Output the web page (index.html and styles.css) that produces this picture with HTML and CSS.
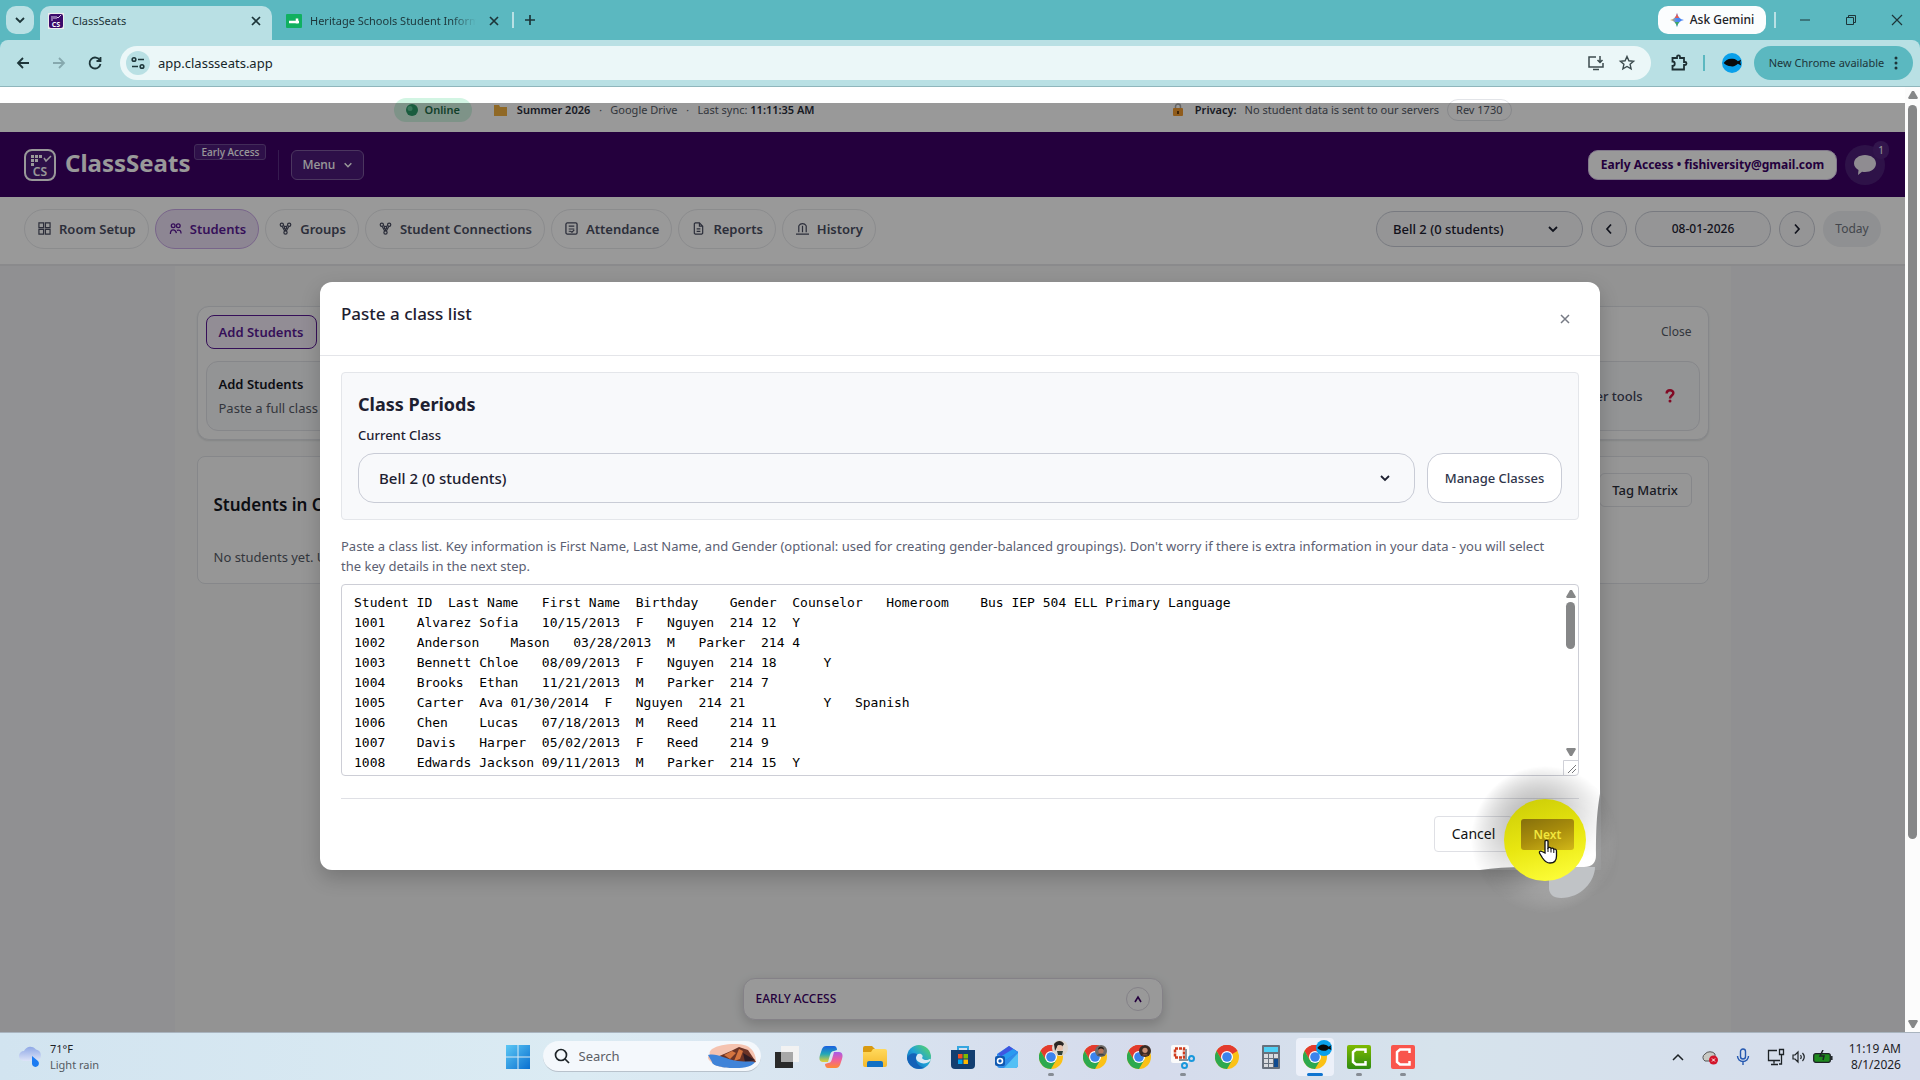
FILE: index.html
```html
<!DOCTYPE html>
<html lang="en">
<head>
<meta charset="utf-8">
<title>ClassSeats</title>
<link rel="stylesheet" href="styles.css">
</head>
<body>
<svg class="defs" aria-hidden="true">
  <defs>
    <linearGradient id="g-win" x1="0" y1="0" x2="1" y2="1"><stop offset="0" stop-color="#5cc8f5"/><stop offset="1" stop-color="#0a6fd0"/></linearGradient>
    <linearGradient id="g-cloud" x1="0" y1="0" x2="0" y2="1"><stop offset="0" stop-color="#8fa8e6"/><stop offset="1" stop-color="#dde4f8"/></linearGradient>
    <linearGradient id="g-folder" x1="0" y1="0" x2="0" y2="1"><stop offset="0" stop-color="#ffd95c"/><stop offset="1" stop-color="#f5b92c"/></linearGradient>
    <linearGradient id="g-edge" x1="0" y1="1" x2="1" y2="0"><stop offset="0" stop-color="#0b56a8"/><stop offset=".5" stop-color="#1fa0d8"/><stop offset="1" stop-color="#5fdc5a"/></linearGradient>
    <linearGradient id="g-cop1" x1="0" y1="0" x2="0" y2="1"><stop offset="0" stop-color="#1a5fe0"/><stop offset=".5" stop-color="#22a8b8"/><stop offset="1" stop-color="#e8d030"/></linearGradient>
    <linearGradient id="g-cop2" x1="0" y1="0" x2="0" y2="1"><stop offset="0" stop-color="#a75be8"/><stop offset=".5" stop-color="#f0609a"/><stop offset="1" stop-color="#ff8a30"/></linearGradient>
    <linearGradient id="g-gem" x1="0" y1="0" x2="1" y2="0"><stop offset="0" stop-color="#f2b32a"/><stop offset=".45" stop-color="#4f8df5"/><stop offset="1" stop-color="#3a78f0"/></linearGradient>
    <linearGradient id="g-green" x1="0" y1="0" x2="0" y2="1"><stop offset="0" stop-color="#7fba00"/><stop offset="1" stop-color="#2e8b10"/></linearGradient>
    <symbol id="chrome" viewBox="0 0 24 24">
      <circle cx="12" cy="12" r="12" fill="#fbc116"/>
      <path d="M12 12 1.600 6A12 12 0 0 1 22.400 6z" fill="#e33b2e"/>
      <path d="M12 6h10.400A12 12 0 0 0 1.600 6l5.200 9z" fill="#e33b2e"/>
      <path d="M1.600 6A12 12 0 0 0 12 24l5.200-9L12 12 6.800 15z" fill="#2da94f"/>
      <circle cx="12" cy="12" r="6" fill="#fff"/><circle cx="12" cy="12" r="4.800" fill="#3c83ec"/>
    </symbol>
    <symbol id="chev" viewBox="0 0 12 12"><path d="M2 4l4 4 4-4" fill="none" stroke="currentColor" stroke-width="1.800"/></symbol>
    <symbol id="cross" viewBox="0 0 12 12"><path d="M2 2l8 8M10 2l-8 8" fill="none" stroke="currentColor" stroke-width="1.700"/></symbol>
    <symbol id="bird" viewBox="0 0 24 24"><circle cx="12" cy="12" r="12" fill="#0aa0ea"/><path d="M2 12c2-3 6-6 11-5 3 0 5 2 6 3l4-2-1 3 1 4-4-2c-2 2-5 4-8 3-4 0-7-2-9-4z" fill="#0a0a0a"/></symbol>
    <symbol id="up" viewBox="0 0 12 12"><path d="M5 2h2l4 7-1 1H2L1 9z" fill="#868788"/></symbol>
    <symbol id="nodes" viewBox="0 0 16 16"><g fill="none" stroke="currentColor" stroke-width="1.500"><circle cx="3.500" cy="3.500" r="2"/><circle cx="12.500" cy="3.500" r="2"/><circle cx="8" cy="13" r="2"/><circle cx="8" cy="7" r="1.500"/><path d="M5.500 4l1.500 2M10.500 4L9 6M8 8.500V11M4 5.500l3 5.500M12 5.500L9 11"/></g></symbol>
  </defs>
</svg>

<header class="tabs">
  <button class="tab-search" aria-label="Search tabs"><svg width="12" height="12"><use href="#chev"/></svg></button>
  <div class="tab tab-active">
    <svg width="16" height="16" viewBox="0 0 16 16"><rect width="16" height="16" fill="#eee"/><rect x="1" y="1" width="14" height="14" rx="2" fill="#3b0b6b"/><path d="M4 3v5M6 3v3M8 3v3" stroke="#d8cbe8"/><path d="M9 4l1 1 3-3" stroke="#d8cbe8" fill="none"/><text x="8" y="14" font-size="7" text-anchor="middle" fill="#fff" font-weight="700">CS</text></svg>
    <span class="tab-title">ClassSeats</span>
    <button class="tab-x" aria-label="Close tab"><svg width="12" height="12"><use href="#cross"/></svg></button>
  </div>
  <div class="tab tab-other">
    <svg width="16" height="16" viewBox="0 0 16 16"><rect y="1" width="16" height="14" rx="1" fill="#10b060"/><path d="M3 9h10M11 5.500v5" stroke="#fff" stroke-width="2.500"/></svg>
    <span class="tab-title fade">Heritage Schools Student Information</span>
    <button class="tab-x" aria-label="Close tab"><svg width="12" height="12"><use href="#cross"/></svg></button>
  </div>
  <span class="tab-rule"></span>
  <button class="icon-btn" aria-label="New tab"><svg width="12" height="12" viewBox="0 0 12 12"><path d="M6 1v10M1 6h10" stroke="#1d3539" stroke-width="1.700"/></svg></button>
  <span class="grow"></span>
  <button class="gemini"><svg width="14" height="14" viewBox="0 0 14 14"><path d="M7 0c.8 4 3 6.200 7 7-4 .8-6.200 3-7 7-.8-4-3-6.200-7-7 4-.8 6.200-3 7-7z" fill="url(#g-gem)"/><path d="M7 0c.5 2.500 1.300 4 2.500 5l-5 0C5.700 4 6.500 2.500 7 0z" fill="#ea5a4f"/><path d="M7 14c-.5-2.500-1.300-4-2.500-5h5C8.300 10 7.500 11.500 7 14z" fill="#3fa860"/></svg>Ask Gemini</button>
  <span class="tab-rule"></span>
  <div class="win-btns">
    <button aria-label="Minimize"><svg width="12" height="12" viewBox="0 0 12 12"><path d="M1 6h10" stroke="#1d3539"/></svg></button>
    <button aria-label="Restore"><svg width="12" height="12" viewBox="0 0 12 12"><path d="M1.500 3.500h7v7h-7zM3.500 3.500v-2h7v7h-2" fill="none" stroke="#1d3539"/></svg></button>
    <button aria-label="Close"><svg width="12" height="12" viewBox="0 0 12 12"><path d="M1 1l10 10M11 1L1 11" stroke="#1d3539" stroke-width="1.200"/></svg></button>
  </div>
</header>

<div class="toolbar">
  <div class="nav-btns">
    <button aria-label="Back"><svg width="16" height="16" viewBox="0 0 16 16"><path d="M14 8H3M8 3L3 8l5 5" fill="none" stroke="#1d3539" stroke-width="1.800"/></svg></button>
    <button aria-label="Forward"><svg width="16" height="16" viewBox="0 0 16 16"><path d="M2 8h11M8 3l5 5-5 5" fill="none" stroke="#86a9ae" stroke-width="1.800"/></svg></button>
    <button aria-label="Reload"><svg width="16" height="16" viewBox="0 0 16 16"><path d="M13 5.500A5.500 5.500 0 1 0 13.500 9M13.500 2v4h-4" fill="none" stroke="#1d3539" stroke-width="1.800"/></svg></button>
  </div>
  <div class="omni">
    <span class="site"><svg width="16" height="16" viewBox="0 0 16 16"><g fill="none" stroke="#1d3539" stroke-width="1.600"><circle cx="4" cy="4.500" r="1.800"/><path d="M8 4.500h6M2 11.500h6"/><circle cx="12" cy="11.500" r="1.800"/></g></svg></span>
    <input class="url" type="text" aria-label="Address" value="app.classseats.app">
    <svg width="18" height="18" viewBox="0 0 18 18"><path d="M9 3H2v10h14V9M6 15.500h6M13 2v6M10.500 6L13 8.500 15.500 6" fill="none" stroke="#3c4b4e" stroke-width="1.500"/></svg>
    <svg width="18" height="18" viewBox="0 0 18 18"><path d="M9 2.500l1.900 4.300 4.700.4-3.500 3.100 1 4.600L9 12.500l-4.100 2.400 1-4.600L2.400 7.200l4.700-.4z" fill="none" stroke="#3c4b4e" stroke-width="1.400"/></svg>
  </div>
  <svg class="puzzle" width="18" height="18" viewBox="0 0 18 18"><path d="M2.500 4h4.500V2.800a1.500 1.500 0 0 1 3 0V4h4v4h1a1.500 1.500 0 0 1 0 3h-1v4.500H2.500V12a2 2 0 0 0 0-4.500z" fill="none" stroke="#1d2f33" stroke-width="1.800"/></svg>
  <span class="tool-rule"></span>
  <svg width="20" height="20"><use href="#bird"/></svg>
  <button class="update">New Chrome available<svg width="4" height="14" viewBox="0 0 4 14"><g fill="#1d3539"><circle cx="2" cy="2" r="1.500"/><circle cx="2" cy="7" r="1.500"/><circle cx="2" cy="12" r="1.500"/></g></svg></button>
</div>

<div class="view">
  <div class="page">
    <div class="status"><div class="status-in">
      <span class="online"><svg width="12" height="12" viewBox="0 0 12 12"><circle cx="6" cy="6" r="6" fill="#2a9a68"/><circle cx="4" cy="4.500" r="2.500" fill="#5fc796"/></svg>Online</span>
      <svg class="folder" width="13" height="12" viewBox="0 0 13 12"><path d="M0 1h5l1 2h7v9H0z" fill="#f0b040"/></svg>
      <b>Summer 2026</b><i>·</i><span>Google Drive</span><i>·</i><span>Last sync: <b>11:11:35 AM</b></span>
      <span class="grow"></span>
      <svg width="10" height="13" viewBox="0 0 10 13"><path d="M2.500 6V3.500a2.500 2.500 0 0 1 5 0V6" fill="none" stroke="#a8a8a8" stroke-width="1.500"/><rect y="5" width="10" height="8" rx="1" fill="#f09a30"/><path d="M5 8v3" stroke="#402000" stroke-width="1.500"/></svg>
      <b class="priv">Privacy:</b><span class="nodata">No student data is sent to our servers</span>
      <span class="rev">Rev 1730</span>
    </div></div>

    <div class="brand">
      <svg width="32" height="32" viewBox="0 0 32 32"><rect x="1" y="1" width="30" height="30" rx="7" fill="#4b1c78" stroke="#fff" stroke-width="2"/><g fill="#fff"><path d="M7 6h3v3H7zM11 6h3v3h-3zM15 6h3v3h-3zM7 10h3v3H7zM11 10h3v3h-3zM7 14h3v3H7z"/></g><path d="M20 9l2 3 5-5" fill="none" stroke="#fff" stroke-width="1.500"/><text x="16" y="27" font-size="12" font-weight="600" text-anchor="middle" fill="#fff">CS</text></svg>
      <span class="logo">ClassSeats</span>
      <span class="early">Early Access</span>
      <span class="brand-rule"></span>
      <button class="menu">Menu<svg width="10" height="10"><use href="#chev"/></svg></button>
      <span class="grow"></span>
      <button class="account">Early Access • fishiversity@gmail.com</button>
      <button class="chat" aria-label="Messages"><svg width="24" height="22" viewBox="0 0 24 22"><path d="M12 1c6 0 11 3.500 11 8.500S18 18 12 18c-1 0-2 0-3-.3L5 21l.5-5C3 14.500 1 12.500 1 9.500 1 4.500 6 1 12 1z" fill="#eee9f2"/></svg><span class="chat-n">1</span></button>
    </div>

    <nav class="nav">
      <button class="pill"><svg width="13" height="13" viewBox="0 0 14 14"><path d="M1 1h5v5H1zM8 1h5v5H8zM1 8h5v5H1zM8 8h5v5H8z" fill="none" stroke="currentColor" stroke-width="1.300"/></svg>Room Setup</button>
      <button class="pill on"><svg width="13" height="13" viewBox="0 0 14 14"><g fill="none" stroke="currentColor" stroke-width="1.400"><circle cx="4.500" cy="4" r="2"/><circle cx="10" cy="4" r="2"/><path d="M1.500 13c0-3 1-4.500 3-4.500S7.500 10 8 12M8.500 9c3-1 4.500.5 4.500 3.500"/></g></svg>Students</button>
      <button class="pill"><svg width="13" height="13"><use href="#nodes"/></svg>Groups</button>
      <button class="pill"><svg width="13" height="13"><use href="#nodes"/></svg>Student Connections</button>
      <button class="pill"><svg width="13" height="13" viewBox="0 0 14 14"><rect x="1" y="1" width="12" height="12" rx="1.500" fill="none" stroke="currentColor" stroke-width="1.400"/><path d="M4 4.500h6M4 7.500h6M4 10h2l1.500 1L10 8.500" fill="none" stroke="currentColor" stroke-width="1.200"/></svg>Attendance</button>
      <button class="pill"><svg width="13" height="13" viewBox="0 0 14 14"><path d="M3.500 1H8l3.500 3.500V12l-1 1h-7l-1-1V2zM8 1v3.500h3M5 7.500h4M5 10h4" fill="none" stroke="currentColor" stroke-width="1.300"/></svg>Reports</button>
      <button class="pill"><svg width="13" height="13" viewBox="0 0 14 14"><path d="M3 11V4M7 11V4M11 11V4M3 4c2-3 6-3 8 0M0 13h14" fill="none" stroke="currentColor" stroke-width="1.300"/></svg>History</button>
      <span class="grow"></span>
      <div class="pick">
        <span class="sel sel-nav"><select aria-label="Class"><option>Bell 2 (0 students)</option></select><svg width="12" height="12"><use href="#chev"/></svg></span>
        <button class="step" aria-label="Previous day"><svg width="12" height="12" viewBox="0 0 12 12"><path d="M8 1.500L4 6l4 4.500" fill="none" stroke="currentColor" stroke-width="1.700"/></svg></button>
        <input class="date" type="text" aria-label="Date" value="08-01-2026">
        <button class="step" aria-label="Next day"><svg width="12" height="12" viewBox="0 0 12 12"><path d="M4 1.500L8 6l-4 4.500" fill="none" stroke="currentColor" stroke-width="1.700"/></svg></button>
        <button class="today">Today</button>
      </div>
    </nav>

    <main class="main">
      <section class="card">
        <div class="card-top"><button class="add">Add Students</button><button class="close">Close</button></div>
        <div class="panel">
          <div><h3>Add Students</h3><p>Paste a full class list</p></div>
          <div class="tools">Other tools<svg width="10" height="14" viewBox="0 0 12 16"><path d="M2 5c0-5 8-5 8-.5 0 3-4 3-4 6.500" fill="none" stroke="#d8103c" stroke-width="3"/><circle cx="6" cy="14" r="1.800" fill="#d8103c"/></svg></div>
        </div>
      </section>
      <section class="card list">
        <div class="list-top"><h2>Students in Class</h2><button class="tag">Tag Matrix</button></div>
        <p>No students yet. Use Add Students.</p>
      </section>
    </main>

    <button class="dock">EARLY ACCESS<span class="dock-up"><svg width="8" height="8" viewBox="0 0 8 8"><path d="M1 7l3-5 3 5" fill="none" stroke="currentColor" stroke-width="1.600"/></svg></span></button>
    <div class="shade"></div>
  </div>
  <div class="scroll"><svg width="12" height="12"><use href="#up"/></svg><span class="thumb"></span><span class="grow"></span><svg class="flip" width="12" height="12"><use href="#up"/></svg></div>

  <div class="layer">
    <div class="modal" role="dialog" aria-labelledby="mt">
      <div class="m-head"><h1 id="mt">Paste a class list</h1><button aria-label="Close"><svg width="12" height="12" viewBox="0 0 12 12"><path d="M2 2l8 8M10 2l-8 8" stroke="#777b85" stroke-width="1.500"/></svg></button></div>
      <div class="m-body">
        <section class="periods">
          <h2>Class Periods</h2>
          <label for="cls">Current Class</label>
          <div class="p-row">
            <span class="sel sel-big"><select id="cls"><option>Bell 2 (0 students)</option></select><svg width="12" height="12"><use href="#chev"/></svg></span>
            <button class="manage">Manage Classes</button>
          </div>
        </section>
        <p class="help" id="help">Paste a class list. Key information is First Name, Last Name, and Gender (optional: used for creating gender-balanced groupings). Don't worry if there is extra information in your data - you will select the key details in the next step.</p>
        <div class="paste">
          <textarea aria-labelledby="help" spellcheck="false">Student ID	Last Name	First Name	Birthday	Gender	Counselor	Homeroom	Bus	IEP	504	ELL	Primary Language
1001	Alvarez	Sofia	10/15/2013	F	Nguyen	214	12	Y
1002	Anderson	Mason	03/28/2013	M	Parker	214	4
1003	Bennett	Chloe	08/09/2013	F	Nguyen	214	18		Y
1004	Brooks	Ethan	11/21/2013	M	Parker	214	7
1005	Carter	Ava	01/30/2014	F	Nguyen	214	21			Y	Spanish
1006	Chen	Lucas	07/18/2013	M	Reed	214	11
1007	Davis	Harper	05/02/2013	F	Reed	214	9
1008	Edwards	Jackson	09/11/2013	M	Parker	214	15	Y</textarea>
          <div class="t-scroll"><svg width="12" height="12"><use href="#up"/></svg><span class="t-thumb"></span><span class="grow"></span><svg class="flip" width="12" height="12"><use href="#up"/></svg><svg class="grip" width="15" height="15" viewBox="0 0 15 15"><path d="M.5 15V.5H15" fill="none" stroke="#d0d1d8"/><path d="M5 13l8-8M9 13l4-4" stroke="#77787c"/></svg></div>
        </div>
        <div class="m-foot">
          <button class="cancel">Cancel</button>
          <div class="next-box">
            <svg class="lens" width="160" height="160" viewBox="0 0 160 160" aria-hidden="true">
              <defs>
                <radialGradient id="l-dark" gradientUnits="userSpaceOnUse" cx="80" cy="80" r="74"><stop offset=".5" stop-color="#000" stop-opacity=".45"/><stop offset="1" stop-color="#000" stop-opacity="0"/></radialGradient>
                <linearGradient id="l-fade" x1=".2" y1="0" x2=".6" y2=".7"><stop offset="0" stop-color="#fff"/><stop offset="1" stop-color="#000"/></linearGradient>
                <mask id="l-mask"><rect width="160" height="160" fill="url(#l-fade)"/></mask>
                <radialGradient id="l-light" gradientUnits="userSpaceOnUse" cx="80" cy="80" r="74"><stop offset=".5" stop-color="#fff" stop-opacity=".35"/><stop offset="1" stop-color="#fff" stop-opacity="0"/></radialGradient>
                <linearGradient id="l-fade2" x1=".4" y1=".4" x2=".75" y2=".8"><stop offset="0" stop-color="#000"/><stop offset="1" stop-color="#fff"/></linearGradient>
                <mask id="l-mask2"><rect width="160" height="160" fill="url(#l-fade2)"/></mask>
              </defs>
              <path d="M136 28C132 50 131 65 131 95q0 12-12 12L60 107q-25 0-45 3h121z" fill="#8c8d8e"/>
              <circle cx="80" cy="80" r="74" fill="url(#l-dark)" mask="url(#l-mask)"/>
              <circle cx="80" cy="80" r="74" fill="url(#l-light)" mask="url(#l-mask2)"/>
              <path d="M84 107h46c0 14-14 31-34 31-8 0-12-4-12-10z" fill="#c0c3c6"/>
            </svg>
            <svg class="spot" width="84" height="84" viewBox="0 0 84 84" aria-hidden="true"><defs><linearGradient id="l-y" x1=".35" y1="0" x2=".65" y2="1"><stop offset="0" stop-color="#cfcf08"/><stop offset=".5" stop-color="#e8e610"/><stop offset="1" stop-color="#fdfd38"/></linearGradient></defs><circle cx="42" cy="42" r="41" fill="url(#l-y)"/></svg>
            <button class="next">Next</button>
            <svg class="hand" width="20" height="26" viewBox="0 0 20 26" aria-hidden="true"><path d="M7 15V3a2 2 0 0 1 3 0v7c1-1 2.500-.7 3 .5 1-.7 2.300-.3 2.700.8 1.200-.6 2.800 0 2.800 1.700v5c0 4-2 7-6.500 7-4 0-5.500-2-7.500-5l-3-5c-.5-1.500 1-2.500 2.500-1.500z" fill="#fff" stroke="#111" stroke-width="1.300"/><path d="M10 10v4M13 11v3.500M15.800 12v3" stroke="#111"/></svg>
          </div>
        </div>
      </div>
    </div>
  </div>
</div>

<footer class="taskbar">
  <div class="weather">
    <svg width="26" height="24" viewBox="0 0 26 24"><path d="M6 16a5 5 0 0 1 0-10 7 7 0 0 1 12-1.500A6 6 0 0 1 19 16z" fill="url(#g-cloud)"/><path d="M14 11l6 5a3.500 3.500 0 1 1-6 3z" fill="#1c7cf2"/></svg>
    <div>71°F<br><span>Light rain</span></div>
  </div>
  <div class="apps">
    <span class="app"><svg width="24" height="24" viewBox="0 0 24 24"><path d="M0 0h11.500v11.500H0zM12.500 0H24v11.500H12.500zM0 12.500h11.500V24H0zM12.500 12.500H24V24H12.500z" fill="url(#g-win)"/></svg></span>
    <label class="find"><svg width="16" height="16" viewBox="0 0 16 16"><circle cx="7" cy="7" r="5.500" fill="none" stroke="#1e2428" stroke-width="1.700"/><path d="M11 11l4 4" stroke="#1e2428" stroke-width="1.700"/></svg><input type="text" placeholder="Search"><svg width="50" height="26" viewBox="0 0 50 26"><path d="M5 6C14 0 38-1 43 5c5 4 6 10 6 14-8 6-36 8-42 2-6-4-8-7-4-9-1-3 0-4 2-6z" fill="#f5c3b0"/><path d="M10 14L24 8l8-4 9 3 8 12-22 2z" fill="#6b3326"/><path d="M17 12l8-4 4 2-6 6zM32 6l4 2-3 8-6 2z" fill="#d4743f"/><path d="M36 10l12 7-10 2z" fill="#2d1b24"/><path d="M1 12c10-2 15 4 30 6 8 1 14 0 17 1-4 6-14 6-22 6S5 23 5 19z" fill="#3f83d8"/></svg></label>
    <span class="app"><svg width="24" height="24" viewBox="0 0 24 24"><rect x="6" y="1" width="18" height="16" fill="#f2f2f2"/><rect y="7" width="18" height="16" fill="#2a2a2a"/><rect x="6" y="7" width="12" height="10" fill="#a8a8a8"/></svg></span>
    <span class="app"><svg width="24" height="24" viewBox="0 0 24 24"><path d="M7 1h8c2 0 3 2 3 4l-3 1c-2 0-3 1-4 4l-2 7H4c-4 0-4-4-3-7l2-6c1-2 2-3 4-3z" fill="url(#g-cop1)"/><path d="M17 23H9c-2 0-3-2-3-4l3-1c2 0 3-1 4-4l2-7h5c4 0 4 4 3 7l-2 6c-1 2-2 3-4 3z" fill="url(#g-cop2)"/></svg></span>
    <span class="app"><svg width="24" height="24" viewBox="0 0 24 24"><path d="M0 3q0-2 2-2h7l3 3v3H0z" fill="#d99a10"/><rect y="4" width="24" height="18" rx="2" fill="url(#g-folder)"/><path d="M0 4h10l-2 3H0z" fill="#d99a10"/><path d="M4 22v-4q0-2 2-2h12q2 0 2 2v4z" fill="#1170c4"/></svg></span>
    <span class="app"><svg width="24" height="24" viewBox="0 0 24 24"><circle cx="12" cy="12" r="12" fill="url(#g-edge)"/><path d="M9 13c0-3 2-5 5-4 2 1 2 3 1 4 2 3 6 2 8 1 1 0 1 1 0 2-2 2-6 3-9 2-3-1-5-3-5-5z" fill="#dbe8f4"/><path d="M9 12c-1 6 4 10 8 11-9 3-16-3-17-10 2-4 6-6 10-4z" fill="#1462b8"/></svg></span>
    <span class="app"><svg width="24" height="24" viewBox="0 0 24 24"><path d="M7 6V2h10v4" fill="none" stroke="#35a6e0" stroke-width="2"/><path d="M0 5h24v15q0 4-4 4H4q-4 0-4-4z" fill="#123e70"/><path d="M7 9h4.500v4.500H7z" fill="#f25022"/><path d="M12.500 9H17v4.500h-4.500z" fill="#7fba00"/><path d="M7 14.500h4.500V19H7z" fill="#00a4ef"/><path d="M12.500 14.500H17V19h-4.500z" fill="#ffb900"/></svg></span>
    <span class="app"><svg width="24" height="24" viewBox="0 0 24 24"><path d="M2 9L14 1l9 6v13q0 3-3 3H5q-3 0-3-3z" fill="#2f8eea"/><path d="M3 9l11-8 9 6-12 8z" fill="#3f55e0"/><path d="M5 12L18 4l5 3-12 8z" fill="#2a9af0"/><path d="M23 8v12q0 3-3 3H9z" fill="#53c0f5"/><rect y="11" width="10" height="10" rx="2" fill="#0f58b0"/><circle cx="5" cy="16" r="2.500" fill="none" stroke="#fff" stroke-width="1.600"/></svg></span>
    <span class="app run"><svg width="24" height="24"><use href="#chrome"/></svg><svg class="face" width="16" height="16" viewBox="0 0 16 16"><circle cx="8" cy="8" r="8" fill="#dcd6cf"/><path d="M2 4c3-4 8-4 10 0l-2 3-4-2-3 6z" fill="#2b2623"/><circle cx="8" cy="8" r="3" fill="#e7c3ad"/><path d="M5 11h6l-1 4H6z" fill="#34443a"/></svg></span>
    <span class="app run-none"><svg width="24" height="24"><use href="#chrome"/></svg><svg class="face low" width="12" height="12" viewBox="0 0 16 16"><circle cx="8" cy="8" r="8" fill="#6d6a66"/><path d="M4 6c0-5 8-5 8 0z" fill="#241b18"/><circle cx="8" cy="8" r="3.500" fill="#b5765a"/><path d="M3 14c1-3 9-3 10 0z" fill="#38424e"/></svg></span>
    <span class="app"><svg width="24" height="24"><use href="#chrome"/></svg><svg class="face low" width="12" height="12" viewBox="0 0 16 16"><circle cx="8" cy="8" r="8" fill="#3a2a24"/><circle cx="8" cy="7" r="3.500" fill="#c98f74"/><path d="M4 14c1-3 7-3 8 0z" fill="#7a4b3a"/></svg></span>
    <span class="app run"><svg width="24" height="24" viewBox="0 0 24 24"><rect width="18" height="18" rx="2" fill="#fafafa"/><rect x="4" y="3.500" width="9" height="9" fill="none" stroke="#cf3b1c" stroke-width="2.500" stroke-dasharray="3 1"/><path d="M15 4v11M8 15h9" stroke="#8a939c" stroke-width="2"/><g fill="none" stroke="#1998dc" stroke-width="2"><circle cx="20.500" cy="13.500" r="2.500"/><circle cx="13.500" cy="20.500" r="2.500"/></g></svg></span>
    <span class="app"><svg width="24" height="24"><use href="#chrome"/></svg></span>
    <span class="app"><svg width="18" height="24" viewBox="0 0 18 24"><rect width="18" height="24" rx="1" fill="#66707c"/><rect x="2" y="2" width="14" height="5" fill="#4fd0f5"/><path d="M2 9h4v4H2zM7 9h4v4H7zM12 9h4v4h-4zM2 14h4v4H2zM7 14h4v4H7zM2 19h4v3H2zM7 19h4v3H7z" fill="#d8dbdf"/><path d="M12 14h4v8h-4z" fill="#0e4a90"/></svg></span>
    <span class="app run active"><svg width="24" height="24"><use href="#chrome"/></svg><svg class="face" width="16" height="16"><use href="#bird"/></svg></span>
    <span class="app run"><svg width="24" height="24" viewBox="0 0 24 24"><rect width="24" height="24" rx="2" fill="url(#g-green)"/><path d="M18.500 8V4.500H9L6 7v10l3 2.500h9.500V16" fill="none" stroke="#fff" stroke-width="2.500"/></svg></span>
    <span class="app run"><svg width="24" height="24" viewBox="0 0 24 24"><rect width="24" height="24" rx="2" fill="#f9554c"/><path d="M18.500 8V4.500H9L6 7v10l3 2.500h9.500V16" fill="none" stroke="#fff" stroke-width="2.500"/></svg></span>
  </div>
  <div class="tray">
    <svg width="12" height="12" viewBox="0 0 12 12"><path d="M1 9l5-5 5 5" fill="none" stroke="#1d2226" stroke-width="1.500"/></svg>
    <svg width="18" height="16" viewBox="0 0 18 16"><path d="M4 12a4 4 0 0 1 0-7 6 5 0 0 1 10 0v7z" fill="#c9c9c4" stroke="#555"/><circle cx="12.500" cy="11" r="4.500" fill="#d3152b"/><path d="M11 9.500l3 3M14 9.500l-3 3" stroke="#fff"/></svg>
    <svg width="14" height="18" viewBox="0 0 14 18"><rect x="4.500" y="1" width="5" height="10" rx="2.500" fill="none" stroke="#2558b0" stroke-width="1.400"/><path d="M1.500 8a5.500 5.500 0 0 0 11 0M7 13.500V17" fill="none" stroke="#2558b0" stroke-width="1.400"/></svg>
    <div class="net">
      <svg width="18" height="18" viewBox="0 0 18 18"><path d="M10 2.500H1.500v10H13M7 12.500v3M4 16.500h7M14.500 7v9H12M12.500 1.500h4v5h-4z" fill="none" stroke="#1d2226" stroke-width="1.300"/></svg>
      <svg width="14" height="14" viewBox="0 0 14 14"><path d="M1 5h2l3-3v10L3 9H1zM8.500 5q1.500 2 0 4M10.500 3q3.500 4 0 8" fill="none" stroke="#1d2226" stroke-width="1.200"/></svg>
      <svg width="20" height="14" viewBox="0 0 20 14"><rect x=".7" y="3.700" width="16.600" height="8.600" rx="2" fill="#1f8a1f" stroke="#1d2226" stroke-width="1.300"/><path d="M18.800 6v4" stroke="#1d2226" stroke-width="1.500"/><path d="M10 0L7 6h4l-1 4" fill="none" stroke="#1d2226" stroke-width="1.500"/></svg>
    </div>
    <div class="clock">11:19 AM<br>8/1/2026</div>
  </div>
</footer>
</body>
</html>
```
FILE: styles.css
```css
* { box-sizing: border-box; }
html, body { height: 100%; }
body {
  margin: 0;
  display: flex;
  flex-direction: column;
  overflow: hidden;
  font: 400 13px/20px "Noto Sans", "Open Sans", sans-serif;
  color: #1d2030;
  background: #5bb8c0;
}
button, input, select, textarea { font: inherit; color: inherit; margin: 0; padding: 0; border: 0; background: none; }
button { display: flex; align-items: center; justify-content: center; white-space: nowrap; }
h1, h2, h3, p { margin: 0; }
svg { flex: none; display: block; }
.defs { position: absolute; width: 0; height: 0; }
.grow { flex: 1; }
.flip { transform: rotate(180deg); }

/* browser tabs */
.tabs { display: flex; align-items: center; height: 40px; padding: 0 0 0 6px; flex: none; font-size: 11px; color: #1d3539; }
.tab-search { width: 28px; height: 28px; border-radius: 10px; background: #b9e0e4; margin-right: 6px; }
.tab { display: flex; align-items: center; gap: 8px; height: 34px; align-self: flex-end; width: 232px; padding: 0 10px 5px 14px; }
.tab-active { background: #b9e0e4; border-radius: 10px 10px 0 0; padding-left: 8px; }
.tab-other { padding-right: 4px; }
.tab-title { flex: 1; overflow: hidden; white-space: nowrap; }
.fade { -webkit-mask-image: linear-gradient(90deg, #000 85%, transparent); mask-image: linear-gradient(90deg, #000 85%, transparent); margin-right: 4px; }
.tab-x { width: 12px; }
.tab-rule { width: 2px; height: 16px; background: #b9e0e4; margin: 0 10px 0 8px; }
.icon-btn { width: 12px; }
.gemini { height: 28px; width: 108px; border-radius: 10px; background: #fbfdfe; gap: 6px; font-size: 12px; font-weight: 500; color: #1d2226; }
.win-btns { display: flex; }
.win-btns button { width: 46px; height: 40px; }
.win-btns button:first-child { margin-left: -4px; }

/* address row */
.toolbar { display: flex; align-items: center; gap: 17px; height: 47px; flex: none; padding: 0 7px 0 15px; background: #b9e0e4; border-bottom: 1px solid #8fb6bc; border-radius: 8px 8px 0 0; color: #1d3539; }
.nav-btns { display: flex; gap: 20px; }
.omni { flex: 1; display: flex; align-items: center; gap: 13px; height: 34px; border-radius: 17px; padding: 0 15px 0 6px; background: #ebf7f8; }
.site { width: 24px; height: 24px; border-radius: 50%; background: #b9e0e4; display: grid; place-items: center; margin-right: -5px; }
.url { flex: 1; font-size: 13px; color: #16262a; }
.tool-rule { width: 2px; height: 16px; background: #5bb8c0; }
.puzzle { margin: 0 -2px 0 2px; }
.update { height: 34px; width: 159px; border-radius: 17px; background: #5bb8c0; font-size: 11px; gap: 10px; margin-left: -5px; }

/* viewport */
.view { flex: 1; display: flex; position: relative; min-height: 0; }
.page { flex: 1; position: relative; min-width: 0; overflow: hidden; display: flex; flex-direction: column; background: #f0f1f3; }
.shade { position: absolute; inset: 16px 0 0; background: rgba(0, 0, 0, .4); }
.scroll { width: 15px; background: #fcfcfc; display: flex; flex-direction: column; align-items: center; padding: 2px 0; }
.thumb { width: 9px; height: 78%; margin-top: 4px; border-radius: 5px; background: #868788; }

.status { height: 45px; flex: none; background: #fff; font-size: 11px; line-height: 16px; color: #555a66; }
.status-in { max-width: 1118px; height: 45px; margin: 0 auto; display: flex; align-items: center; white-space: nowrap; }
.status b { font-weight: 600; color: #2a2d3a; }
.status i { width: 20px; text-align: center; }
.online { display: flex; align-items: center; gap: 7px; height: 24px; padding: 0 12px; border-radius: 12px; background: #d2f5e3; color: #1f6b48; font-weight: 600; }
.folder { margin: 0 10px 0 22px; }
.priv { margin: 0 8px 0 12px; }
.rev { margin-left: 8px; height: 22px; padding: 2px 8px; border: 1px solid #e2e4e8; border-radius: 11px; }

.brand { height: 65px; flex: none; display: flex; align-items: center; padding: 0 20px 0 24px; background: #3c0067; color: #fff; }
.logo { font-size: 24px; line-height: 28px; padding-bottom: 4px; font-weight: 700; margin: 0 4px 0 9px; }
.early { align-self: flex-start; margin-top: 12px; height: 16px; padding: 0 6px; border: 1px solid #6f4a94; border-radius: 3px; background: #4d1c7a; font-size: 10px; line-height: 14px; font-weight: 500; }
.brand-rule { width: 1px; height: 30px; margin: 0 12px; background: #5a2d84; }
.menu { width: 73px; height: 30px; gap: 8px; border: 1px solid #7d5a9e; border-radius: 6px; background: #4b1a78; font-size: 12px; font-weight: 500; }
.account { width: 249px; height: 30px; margin-right: 8px; border: 1px solid #d8c8e8; border-radius: 10px; background: #fff; color: #3c0067; font-size: 12px; font-weight: 700; }
.chat { position: relative; width: 40px; height: 40px; border-radius: 50%; background: #4d1f78; }
.chat-n { position: absolute; right: -4px; top: -4px; width: 16px; height: 18px; border-radius: 9px; background: #54247f; font-size: 10px; line-height: 18px; }

.nav { height: 69px; flex: none; display: flex; align-items: center; gap: 6px; padding: 0 24px 4px; background: #fff; border-bottom: 2px solid #e6e7ea; color: #4a4e62; }
.pill { height: 40px; gap: 8px; padding: 0 12px 0 13px; border: 1px solid #e8e9ec; border-radius: 20px; font-weight: 600; }
.pill.on { background: #ece0f6; border-color: #c9a8e6; color: #5a1a94; }
.pick { display: flex; gap: 8px; }
.sel { display: flex; align-items: center; border: 1px solid #c9ccd6; }
.sel select { appearance: none; flex: 1; height: 100%; font-weight: 500; }
.sel-nav { width: 207px; height: 36px; padding: 0 23px 0 16px; border-radius: 18px; background: #f8f9fb; color: #1d2030; }
.step, .date { height: 36px; border: 1px solid #c9ccd6; border-radius: 18px; background: #f8f9fb; color: #1d2030; }
.step { width: 36px; }
.date { width: 136px; text-align: center; font-size: 12px; font-weight: 500; }
.today { width: 58px; height: 36px; border-radius: 18px; background: #eef0f3; color: #70757f; font-size: 12px; }

.main { flex: 1; width: 100%; max-width: 1556px; margin: 0 auto; padding: 40px 22px; background: #f5f6f6; }
.card { border: 1px solid #dfe1e6; border-radius: 12px; background: #fbfbfb; padding: 8px; box-shadow: 0 1px 2px rgba(0, 0, 0, .1); }
.card-top { display: flex; justify-content: space-between; align-items: center; height: 34px; padding-right: 8px; }
.add { width: 111px; height: 34px; border: 1px solid #5a1a94; border-radius: 8px; background: #f3ebf8; color: #5a1a94; font-weight: 600; }
.close { font-size: 12px; color: #555a66; }
.panel { display: flex; justify-content: space-between; align-items: center; height: 70px; margin-top: 12px; padding: 0 24px 0 12px; border: 1px solid #dfe1e6; border-radius: 12px; background: #f6f7f9; }
.panel h3 { font-size: 13px; line-height: 24px; font-weight: 600; color: #14161f; }
.panel p, .list p { line-height: 24px; color: #555a66; }
.tools { display: flex; align-items: center; gap: 22px; font-weight: 500; color: #40445a; }
.list { margin-top: 16px; height: 128px; padding: 16px; box-shadow: none; border-radius: 8px; }
.list-top { display: flex; justify-content: space-between; }
.list h2 { font-size: 17px; line-height: 64px; font-weight: 600; color: #14161f; }
.tag { width: 93px; height: 34px; border: 1px solid #dfe1e6; border-radius: 6px; font-weight: 500; color: #2a2d3a; }
.list p { margin-top: 8px; }

.dock { position: absolute; left: 50%; bottom: 12px; width: 420px; height: 42px; transform: translateX(-50%); justify-content: space-between; padding: 0 12px; border: 1px solid #dcd8e2; border-radius: 12px; background: #fff; box-shadow: 0 4px 12px rgba(0, 0, 0, .18); color: #3c0067; font-size: 12px; font-weight: 500; }
.dock-up { width: 24px; height: 24px; border: 1px solid #dcd8e2; border-radius: 50%; display: grid; place-items: center; }

/* dialog */
.layer { position: absolute; inset: 0; display: flex; justify-content: center; align-items: flex-start; padding-top: 195px; }
.modal { width: 1280px; max-width: 90%; border-radius: 12px; background: #fff; box-shadow: 0 8px 20px rgba(0, 0, 0, .2); }
.m-head { display: flex; justify-content: space-between; height: 74px; padding: 22px 29px 0 21px; border-bottom: 1px solid #e4e5e9; }
.m-head h1 { font-size: 17px; line-height: 20px; font-weight: 500; }
.m-head button { height: 30px; }
.m-body { padding: 16px 21px 17px; }
.periods { padding: 16px; border: 1px solid #e4e6ea; border-radius: 4px; background: #f8f9fb; }
.periods h2 { font-size: 18px; line-height: 30px; font-weight: 700; }
.periods label { display: block; margin: 6px 0 8px; font-weight: 500; }
.p-row { display: flex; gap: 12px; }
.sel-big { flex: 1; height: 50px; padding: 0 23px 0 20px; border-radius: 16px; font-size: 15px; }
.manage { width: 135px; height: 50px; border: 1px solid #c9ccd6; border-radius: 16px; background: #fff; font-weight: 500; color: #30354a; }
.help { margin: 16px 0 8px; padding-right: 16px; color: #5b6072; }
.paste { display: flex; height: 192px; border: 1px solid #cdced6; border-radius: 4px; overflow: hidden; }
.paste textarea { flex: 1; padding: 8px 12px 0; resize: none; outline: 0; overflow: hidden; white-space: pre; tab-size: 4; font: 13px/20px "DejaVu Sans Mono", "Liberation Mono", monospace; color: #000; }
.t-scroll { width: 15px; display: flex; flex-direction: column; align-items: center; padding-top: 3px; }
.t-thumb { width: 9px; height: 47px; margin-top: 2px; border-radius: 5px; background: #868788; }
.grip { margin-top: 2px; }
.m-foot { display: flex; justify-content: flex-end; gap: 8px; margin-top: 22px; padding: 17px 5px 0 0; border-top: 1px solid #dfe0e5; }
.cancel { width: 79px; height: 36px; border: 1px solid #dfe0e5; border-radius: 4px; color: #111; font-size: 14px; }
.next-box { position: relative; padding: 3px 0; isolation: isolate; }
.next { width: 53px; height: 31px; border-radius: 3px; background: linear-gradient(160deg, #86700c, #a98d0c 50%, #d2b818); color: #f2e63c; font-size: 12px; font-weight: 600; }
.lens { position: absolute; left: -56px; top: -56px; z-index: -1; pointer-events: none; }
.spot { position: absolute; left: -18px; top: -18px; z-index: -1; pointer-events: none; }
.hand { position: absolute; left: 17px; top: 22px; pointer-events: none; }

/* taskbar */
.taskbar { flex: none; height: 48px; display: grid; grid-template-columns: 1fr auto 1fr; align-items: center; border-top: 1px solid #a9b4bf; background: linear-gradient(90deg, #d2e4f0, #dbebf3 30%, #d5dbec 60%, #d6e3ec 75%, #d6dcec); }
.weather { display: flex; align-items: center; gap: 6px; padding-left: 18px; font-size: 11px; line-height: 16px; color: #1d2226; }
.weather span { color: #545a62; }
.apps { display: flex; align-items: center; }
.app { position: relative; width: 38px; height: 38px; margin: 0 3px; border-radius: 4px; display: grid; place-items: center; }
.app.active { background: #ecf0f9; }
.run::after { content: ""; position: absolute; bottom: 0; left: 16px; width: 6px; height: 3px; border-radius: 2px; background: #868c94; }
.run.active::after { left: 11px; width: 16px; background: #0f74d0; }
.face { position: absolute; right: 2px; top: 2px; }
.face.low { right: 7px; top: 7px; }
.find { display: flex; align-items: center; width: 218px; height: 31px; margin: 0 4px 0 3px; padding: 0 4px 0 11px; gap: 9px; border-radius: 16px; background: #f4f8fc; border-bottom: 1px solid #b8c2cc; }
.find input { flex: 1; min-width: 0; }
.find input::placeholder { color: #5c6066; opacity: 1; }
.tray { display: flex; align-items: center; justify-content: flex-end; gap: 17px; padding-right: 19px; }
.net { display: flex; align-items: center; gap: 7px; }
.clock { margin-left: -1px; font-size: 12px; line-height: 16px; text-align: right; color: #1d2226; }
```
